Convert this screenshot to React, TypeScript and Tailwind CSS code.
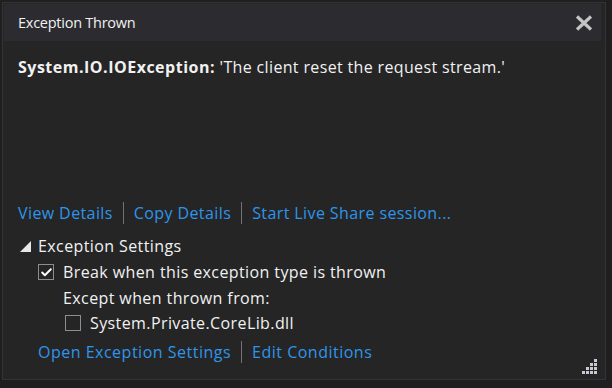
import { Check } from "lucide-react";

function Sep() {
  return <span className="mx-[10px] inline-block h-[22px] w-px bg-[#727272]" />;
}

function Link({ children }: { children: React.ReactNode }) {
  return <span className="text-[#2f95ea] cursor-pointer hover:underline">{children}</span>;
}

function Grip() {
  const dots = [
    [3, 0],
    [2, 1],
    [3, 1],
    [1, 2],
    [2, 2],
    [3, 2],
    [0, 3],
    [1, 3],
    [2, 3],
    [3, 3],
  ];
  return (
    <svg width="16" height="16" viewBox="0 0 16 16" className="absolute right-[8px] bottom-[5px]">
      {dots.map(([x, y]) => (
        <rect key={`${x}-${y}`} x={x * 4 + 1} y={y * 4 + 1} width="3" height="3" fill="#c8c8d2" />
      ))}
    </svg>
  );
}

export default function App() {
  return (
    <div
      className="h-[388px] w-[612px] bg-[#1f1f1f] p-[2px] pr-[6px] pb-[8px] text-[16px] tracking-[0.4px] text-[#f1f1f1]"
      style={{ fontFamily: '"Open Sans", "Noto Sans", sans-serif' }}
    >
      <div className="relative flex h-full flex-col border border-[#333337] bg-[#252526]">
        {/* Title bar */}
        <div className="ml-px mr-[4px] mt-px flex h-[37px] items-center justify-between bg-[#2b2b30] pl-[14px] pr-[8px]">
          <span className="text-[14.5px] tracking-[-0.25px]">Exception Thrown</span>
          <svg width="18" height="16" viewBox="0 0 18 16">
            <path d="M2 1.5 L16 14.5 M16 1.5 L2 14.5" stroke="#c4c4c4" strokeWidth="3.2" />
          </svg>
        </div>

        {/* Message */}
        <div className="px-[15px] pt-[16px] leading-[20px]">
          <span className="font-bold tracking-[0.5px]">System.IO.IOException:</span>{" "}
          <span className="tracking-[0.35px]">'The client reset the request stream.'</span>
        </div>

        <div className="flex-1" />

        {/* Actions */}
        <div className="flex items-center px-[15px] leading-[20px]">
          <Link>View Details</Link>
          <Sep />
          <Link>Copy Details</Link>
          <Sep />
          <Link>Start Live Share session...</Link>
        </div>

        {/* Exception settings */}
        <div className="mt-[12px] flex items-center px-[17px] leading-[20px]">
          <svg width="11" height="11" viewBox="0 0 11 11" className="mr-[7px]">
            <path d="M11 0 L11 11 L0 11 Z" fill="#e8e8e8" />
          </svg>
          <span>Exception Settings</span>
        </div>

        <div className="flex flex-col pl-[35px] pb-[16px] leading-[20px]">
          <div className="mt-[6px] flex items-center">
            <span className="mr-[9px] flex h-[16px] w-[16px] items-center justify-center border border-[#8e8e8e] bg-[#252526]">
              <Check size={13} strokeWidth={3.5} className="text-white" />
            </span>
            <span>Break when this exception type is thrown</span>
          </div>
          <div className="mt-[6px] pl-[25px]">Except when thrown from:</div>
          <div className="mt-[5px] flex items-center pl-[27px]">
            <span className="mr-[9px] h-[16px] w-[16px] border border-[#8e8e8e]" />
            <span>System.Private.CoreLib.dll</span>
          </div>
          <div className="mt-[8px] flex items-center tracking-[0.5px]">
            <Link>Open Exception Settings</Link>
            <Sep />
            <Link>Edit Conditions</Link>
          </div>
        </div>

        <Grip />
      </div>
    </div>
  );
}
